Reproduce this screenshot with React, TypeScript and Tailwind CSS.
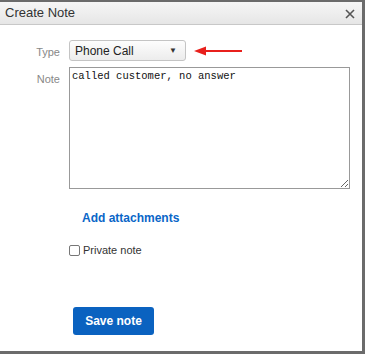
export default function App() {
  return (
    <div className="w-[365px] h-[354px] bg-[#6b6b6b] pt-[2px] pr-[3px] pb-[3px] font-['Liberation_Sans',Arial,sans-serif]">
      <div className="h-full bg-white flex flex-col">
        <div className="h-[23px] flex items-center justify-between pl-[5px] pr-[7px] bg-gradient-to-b from-[#f6f6f6] to-[#e6e6e6] border-b border-[#c8c8c8]">
          <span className="text-[13px] text-[#333]">Create Note</span>
          <svg width="10" height="10" viewBox="0 0 10 10" className="mt-[2px]">
            <path d="M1 1 L9 9 M9 1 L1 9" stroke="#555" strokeWidth="1.6" />
          </svg>
        </div>

        <div className="flex flex-col pt-[15px]">
          <div className="flex items-center">
            <span className="w-[62px] pr-[2px] text-right text-[11px] text-[#888] pt-[3px]">Type</span>
            <div className="ml-[7px] w-[117px] h-[21px] border border-[#c4c4c4] rounded-[3px] bg-gradient-to-b from-[#fdfdfd] to-[#ececec] flex items-center justify-between pl-[5px] pr-[8px]">
              <span className="text-[12px] text-[#222]">Phone Call</span>
              <span className="text-[8px] text-[#333]">▼</span>
            </div>
            <svg width="50" height="12" viewBox="0 0 50 12" className="ml-[8px]">
              <path d="M8 6 H48" stroke="#e8201c" strokeWidth="2.2" />
              <path d="M0 6 L12 1.5 L12 10.5 Z" fill="#e8201c" />
            </svg>
          </div>

          <div className="flex mt-[6px]">
            <span className="w-[62px] pr-[2px] text-right text-[11px] text-[#888] pt-[4px]">Note</span>
            <textarea
              defaultValue="called customer, no answer"
              className="ml-[7px] w-[281px] h-[122px] border border-[#999] px-[2px] py-[1px] text-[10.5px] leading-[14px] text-[#111] font-['Liberation_Mono',monospace] resize-y"
            />
          </div>

          <div className="pl-[82px] mt-[16px]">
            <span className="text-[12px] font-bold text-[#0a66c8]">Add attachments</span>
          </div>

          <label className="flex items-center pl-[69px] mt-[13px]">
            <span className="w-[11px] h-[11px] border border-[#777] rounded-[2px] bg-white" />
            <span className="ml-[3px] text-[11px] text-[#333]">Private note</span>
          </label>

          <div className="pl-[73px] mt-[48px]">
            <button className="w-[81px] h-[28px] rounded-[3px] bg-[#0a62c0] text-white text-[12px] font-bold">
              Save note
            </button>
          </div>
        </div>
      </div>
    </div>
  );
}
